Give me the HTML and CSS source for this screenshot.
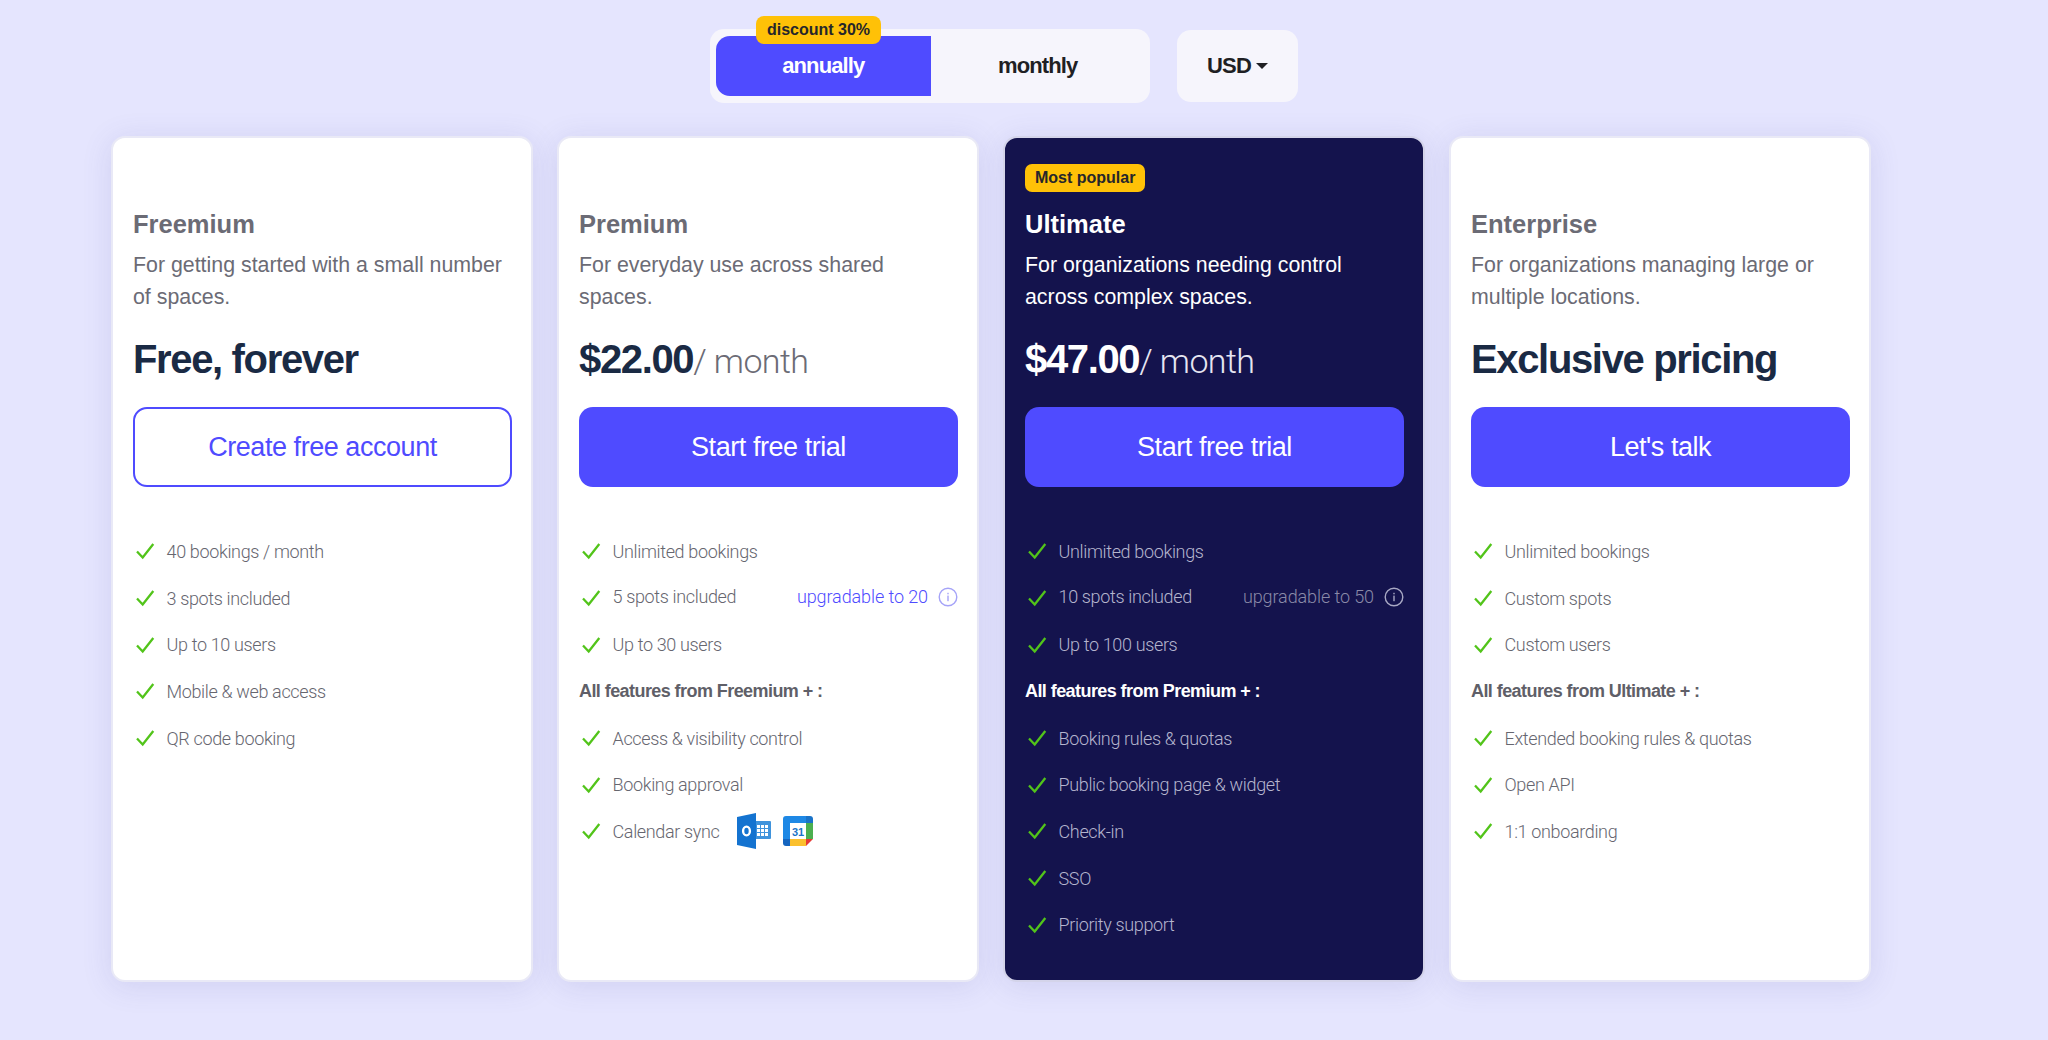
FILE: index.html
```html
<!DOCTYPE html>
<html lang="en">
<head>
<meta charset="utf-8">
<title>Pricing</title>
<link rel="stylesheet" href="styles.css">
</head>
<body>
<svg class="defs" width="0" height="0" aria-hidden="true">
  <symbol id="check" viewBox="0 0 20 18"><path d="M2 9.500 L7.700 15.500 L18.300 2" fill="none" stroke="#52c41a" stroke-width="2.300"/></symbol>
  <symbol id="info" viewBox="0 0 20 20"><circle cx="10" cy="10" r="8.800" fill="none" stroke="currentColor" stroke-width="1.400"/><rect x="9.300" y="8.600" width="1.400" height="5.600" fill="currentColor"/><rect x="9.300" y="5.800" width="1.400" height="1.500" fill="currentColor"/></symbol>
</svg>
<div class="controls">
  <div class="toggle">
    <span class="discount">discount 30%</span>
    <div class="opt opt-on">annually</div>
    <div class="opt">monthly</div>
  </div>
  <div class="currency">USD<span class="caret"></span></div>
</div>
<main class="plans">
  <section class="card">
    <div class="badge-slot"></div>
    <h2 class="name">Freemium</h2>
    <p class="desc">For getting started with a small number of spaces.</p>
    <div class="price"><b>Free, forever</b></div>
    <a class="btn btn-outline">Create free account</a>
    <ul class="features">
      <li><svg class="tick"><use href="#check"/></svg>40 bookings / month</li>
      <li><svg class="tick"><use href="#check"/></svg>3 spots included</li>
      <li><svg class="tick"><use href="#check"/></svg>Up to 10 users</li>
      <li><svg class="tick"><use href="#check"/></svg>Mobile &amp; web access</li>
      <li><svg class="tick"><use href="#check"/></svg>QR code booking</li>
    </ul>
  </section>
  <section class="card">
    <div class="badge-slot"></div>
    <h2 class="name">Premium</h2>
    <p class="desc">For everyday use across shared spaces.</p>
    <div class="price"><b>$22.00</b><span class="per">/ month</span></div>
    <a class="btn">Start free trial</a>
    <ul class="features">
      <li><svg class="tick"><use href="#check"/></svg>Unlimited bookings</li>
      <li><svg class="tick"><use href="#check"/></svg><span class="lift">5 spots included</span><span class="upg lift">upgradable to 20<svg class="info"><use href="#info"/></svg></span></li>
      <li><svg class="tick"><use href="#check"/></svg>Up to 30 users</li>
      <li class="head">All features from Freemium + :</li>
      <li><svg class="tick"><use href="#check"/></svg>Access &amp; visibility control</li>
      <li><svg class="tick"><use href="#check"/></svg>Booking approval</li>
      <li><svg class="tick"><use href="#check"/></svg>Calendar sync
        <svg class="app app-ol" viewBox="0 0 34 36"><rect x="17" y="8" width="17" height="18" rx="1" fill="#3f93dc"/><g fill="#fff"><rect x="20" y="12" width="3" height="3"/><rect x="24" y="12" width="3" height="3"/><rect x="28" y="12" width="3" height="3"/><rect x="20" y="16" width="3" height="3"/><rect x="24" y="16" width="3" height="3"/><rect x="28" y="16" width="3" height="3"/><rect x="20" y="20" width="3" height="3"/><rect x="24" y="20" width="3" height="3"/><rect x="28" y="20" width="3" height="3"/></g><path d="M0 4 L19 0 V36 L0 32 Z" fill="#1473d0"/><ellipse cx="9.500" cy="18" rx="3.400" ry="4.400" fill="none" stroke="#fff" stroke-width="2.400"/></svg>
        <svg class="app app-cal" viewBox="0 0 30 30"><path d="M3 0 H23 V7 H7 V23 H0 V3 A3 3 0 0 1 3 0 Z" fill="#1e88e5"/><path d="M23 0 H27 A3 3 0 0 1 30 3 V7 H23 Z" fill="#1a73c8"/><rect x="23" y="7" width="7" height="16" fill="#4caf50"/><path d="M7 23 H23 V30 H7 Z" fill="#fbc02d"/><path d="M0 23 H7 V30 H3 A3 3 0 0 1 0 27 Z" fill="#1565c0"/><path d="M23 23 H30 L23 30 Z" fill="#e53935"/><rect x="7" y="7" width="16" height="16" fill="#fff"/><text x="15" y="20" class="cal-num">31</text></svg>
      </li>
    </ul>
  </section>
  <section class="card card-dark">
    <div class="badge-slot"><span class="popular">Most popular</span></div>
    <h2 class="name">Ultimate</h2>
    <p class="desc">For organizations needing control across complex spaces.</p>
    <div class="price"><b>$47.00</b><span class="per">/ month</span></div>
    <a class="btn">Start free trial</a>
    <ul class="features">
      <li><svg class="tick"><use href="#check"/></svg>Unlimited bookings</li>
      <li><svg class="tick"><use href="#check"/></svg><span class="lift">10 spots included</span><span class="upg lift">upgradable to 50<svg class="info"><use href="#info"/></svg></span></li>
      <li><svg class="tick"><use href="#check"/></svg>Up to 100 users</li>
      <li class="head">All features from Premium + :</li>
      <li><svg class="tick"><use href="#check"/></svg>Booking rules &amp; quotas</li>
      <li><svg class="tick"><use href="#check"/></svg>Public booking page &amp; widget</li>
      <li><svg class="tick"><use href="#check"/></svg>Check-in</li>
      <li><svg class="tick"><use href="#check"/></svg>SSO</li>
      <li><svg class="tick"><use href="#check"/></svg>Priority support</li>
    </ul>
  </section>
  <section class="card">
    <div class="badge-slot"></div>
    <h2 class="name">Enterprise</h2>
    <p class="desc">For organizations managing large or multiple locations.</p>
    <div class="price"><b>Exclusive pricing</b></div>
    <a class="btn">Let's talk</a>
    <ul class="features">
      <li><svg class="tick"><use href="#check"/></svg>Unlimited bookings</li>
      <li><svg class="tick"><use href="#check"/></svg>Custom spots</li>
      <li><svg class="tick"><use href="#check"/></svg>Custom users</li>
      <li class="head">All features from Ultimate + :</li>
      <li><svg class="tick"><use href="#check"/></svg>Extended booking rules &amp; quotas</li>
      <li><svg class="tick"><use href="#check"/></svg>Open API</li>
      <li><svg class="tick"><use href="#check"/></svg>1:1 onboarding</li>
    </ul>
  </section>
</main>
</body>
</html>
```
FILE: styles.css
```css
* { box-sizing: border-box; }
html, body { height: 100%; }
body {
  margin: 0;
  background: #e5e5fe;
  font-family: "Liberation Sans", Arial, sans-serif;
  overflow: hidden;
}
.defs { position: absolute; }
.controls {
  display: flex;
  align-items: flex-start;
  gap: 27px;
  padding: 29px 0 0 710px;
  height: 136px;
}
.toggle {
  position: relative;
  display: flex;
  width: 440px;
  height: 74px;
  padding: 7px 5px 7px 6px;
  background: #f6f5fc;
  border-radius: 14px;
}
.opt {
  flex: 1;
  display: flex;
  align-items: center;
  justify-content: center;
  font-size: 22px;
  font-weight: 700;
  letter-spacing: -0.9px;
  color: #1f1f24;
}
.opt-on {
  background: #4f4bff;
  color: #fff;
  border-radius: 14px 0 0 14px;
}
.discount {
  position: absolute;
  left: 46px;
  top: -13px;
  width: 125px;
  height: 28px;
  display: flex;
  align-items: center;
  justify-content: center;
  background: #ffc107;
  border-radius: 8px;
  font-size: 16px;
  font-weight: 700;
  color: #26262b;
}
.currency {
  width: 121px;
  height: 72px;
  margin-top: 1px;
  display: flex;
  align-items: center;
  justify-content: center;
  gap: 5px;
  background: #f6f5fc;
  border-radius: 14px;
  font-size: 22px;
  font-weight: 700;
  letter-spacing: -0.8px;
  color: #1f1f24;
}
.caret {
  border-left: 6.500px solid transparent;
  border-right: 6.500px solid transparent;
  border-top: 6px solid #1f1f24;
}
.plans {
  display: grid;
  grid-template-columns: repeat(4, 1fr);
  gap: 24px;
  width: 1760px;
  height: 846px;
  margin-left: 111px;
}
.card {
  display: flex;
  flex-direction: column;
  padding: 0 19px 0 20px;
  background: #fff;
  border: 2px solid #e9e9f6;
  border-radius: 14px;
  box-shadow: 0 4px 30px rgba(80, 80, 160, 0.14);
  color: #6b6b75;
}
.card-dark {
  background: #14134d;
  border-color: #d4d4ea;
  color: #fff;
}
.badge-slot {
  height: 68px;
  padding-top: 26px;
  display: flex;
  align-items: flex-start;
}
.popular {
  display: flex;
  align-items: center;
  height: 28px;
  padding: 0 10px;
  background: #ffc107;
  border-radius: 7px;
  font-size: 16px;
  font-weight: 700;
  color: #26262b;
}
.name {
  margin: 0;
  font-size: 25.500px;
  line-height: 36px;
  font-weight: 700;
}
.desc {
  margin: 7px 0 0;
  min-height: 64px;
  font-size: 21.350px;
  line-height: 32px;
}
.price {
  margin-top: 21px;
  height: 50px;
  font-size: 40px;
  line-height: 50px;
  letter-spacing: -1.350px;
  color: #1a2a44;
  white-space: nowrap;
}
.card-dark .price { color: #fff; }
.per {
  font-family: Roboto, "Liberation Sans", sans-serif;
  font-weight: 300;
  font-size: 34px;
  letter-spacing: -0.6px;
  color: #6b6b75;
}
.card-dark .per { color: #e6e6f2; }
.btn {
  display: flex;
  align-items: center;
  justify-content: center;
  height: 80px;
  margin-top: 23px;
  background: #4f4bff;
  border-radius: 14px;
  font-size: 27px;
  letter-spacing: -0.45px;
  color: #fff;
}
.btn-outline {
  background: #fff;
  border: 2px solid #4f4bff;
  color: #4f4bff;
}
.features {
  list-style: none;
  margin: 41px 0 0;
  padding: 0;
  font-family: Roboto, "Liberation Sans", sans-serif;
  font-weight: 300;
  font-size: 18px;
  letter-spacing: -0.35px;
  color: #66666f;
}
.card-dark .features { color: #b5b5ce; }
.features li {
  display: flex;
  align-items: center;
  height: 46.700px;
}
.features .head {
  font-family: "Liberation Sans", Arial, sans-serif;
  font-size: 18px;
  letter-spacing: -0.57px;
  font-weight: 700;
  color: #5f5f68;
}
.card-dark .features .head { color: #fff; }
.tick {
  flex: none;
  width: 20px;
  height: 18px;
  margin: 0 11.500px 0 2px;
}
.lift { margin-bottom: 3px; }
.upg {
  display: flex;
  align-items: center;
  gap: 10px;
  margin-left: auto;
  color: #4f4bff;
  letter-spacing: -0.1px;
}
.card-dark .upg { color: #8a8aa8; }
.info {
  width: 20px;
  height: 20px;
  color: #a5a3f8;
}
.card-dark .info { color: #a9a9c4; }
.app { flex: none; }
.app-ol {
  width: 34px;
  height: 36px;
  margin-left: 17px;
}
.app-cal {
  width: 30px;
  height: 30px;
  margin-left: 12px;
}
.cal-num {
  font-family: "Liberation Sans", Arial, sans-serif;
  font-size: 11px;
  font-weight: 700;
  letter-spacing: 0;
  text-anchor: middle;
  fill: #1a73c8;
}
```
